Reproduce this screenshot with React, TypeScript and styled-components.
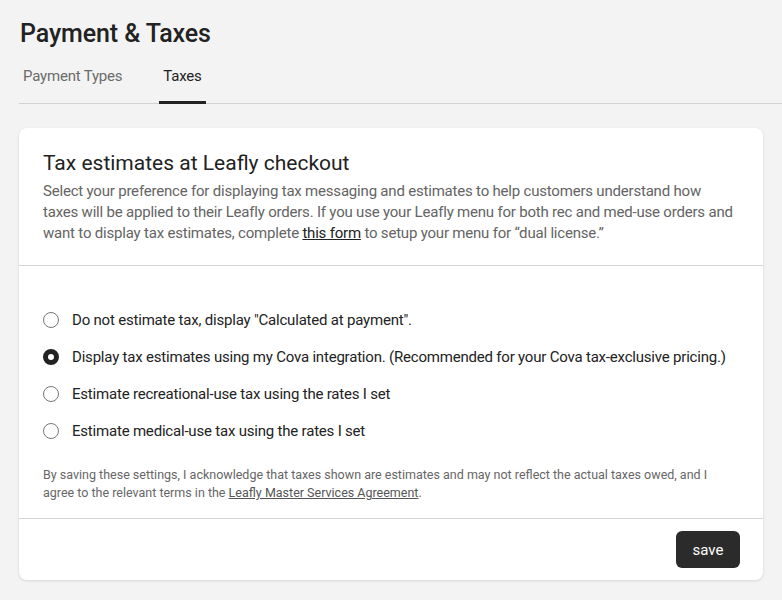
import { useState } from "react";
import styled, { createGlobalStyle } from "styled-components";

const GlobalStyle = createGlobalStyle`
  body {
    margin: 0;
    background: #f3f3f3;
    font-family: Roboto, "Noto Sans", Arial, sans-serif;
    color: #222;
  }
`;

const Page = styled.div`
  padding: 18px 0 20px 19px;
`;

const PageTitle = styled.h1`
  margin: 0 0 0 1px;
  font-size: 25px;
  line-height: 32px;
  font-weight: 500;
  letter-spacing: -0.1px;
  color: #222;
`;

const TabBar = styled.div`
  display: flex;
  gap: 33px;
  margin-top: 16px;
  border-bottom: 1px solid #d2d2d2;
`;

const Tab = styled.button<{ $active?: boolean }>`
  background: none;
  border: none;
  padding: 0 4px 15px;
  margin-bottom: -1px;
  font-family: inherit;
  font-size: 15px;
  line-height: 20px;
  letter-spacing: -0.2px;
  color: ${(p) => (p.$active ? "#222" : "#6b6b6b")};
  border-bottom: 3px solid ${(p) => (p.$active ? "#222" : "transparent")};
  cursor: pointer;
`;

const Card = styled.section`
  margin: 24px 19px 0 0;
  background: #fff;
  border-radius: 8px;
  box-shadow: 0 1px 3px rgba(0, 0, 0, 0.12);
`;

const CardHeader = styled.div`
  padding: 22px 24px 21px;
  border-bottom: 1px solid #d6d6d6;
`;

const CardTitle = styled.h2`
  margin: 0 0 5px;
  font-size: 21px;
  line-height: 26px;
  font-weight: 400;
  color: #222;
`;

const Description = styled.p`
  margin: 0;
  font-size: 15px;
  line-height: 21px;
  letter-spacing: -0.2px;
  white-space: nowrap;
  color: #646464;
  a {
    color: #222;
    text-decoration: underline;
  }
`;

const OptionsSection = styled.div`
  padding: 35px 24px 16px;
  border-bottom: 1px solid #d6d6d6;
`;

const OptionRow = styled.label`
  display: flex;
  align-items: center;
  gap: 13px;
  height: 37px;
  font-size: 15px;
  letter-spacing: -0.2px;
  white-space: nowrap;
  color: #222;
  cursor: pointer;
`;

const RadioDot = styled.span<{ $checked?: boolean }>`
  box-sizing: border-box;
  width: 16px;
  height: 16px;
  border-radius: 50%;
  flex-shrink: 0;
  border: ${(p) => (p.$checked ? "5px solid #222" : "1px solid #777")};
  background: #fff;
`;

const Footnote = styled.p`
  margin: 17px 0 0;
  font-size: 12.5px;
  line-height: 18px;
  white-space: nowrap;
  color: #666;
  a {
    color: #555;
    text-decoration: underline;
  }
`;

const CardFooter = styled.div`
  display: flex;
  justify-content: flex-end;
  padding: 12px 23px 12px;
`;

const SaveButton = styled.button`
  width: 64px;
  height: 37px;
  border: none;
  border-radius: 6px;
  background: #2b2b2b;
  color: #fff;
  font-family: inherit;
  font-size: 15px;
  cursor: pointer;
`;

const options = [
  'Do not estimate tax, display "Calculated at payment".',
  "Display tax estimates using my Cova integration. (Recommended for your Cova tax-exclusive pricing.)",
  "Estimate recreational-use tax using the rates I set",
  "Estimate medical-use tax using the rates I set",
];

const App = () => {
  const [tab, setTab] = useState("taxes");
  const [selected, setSelected] = useState(1);

  return (
    <Page>
      <GlobalStyle />
      <PageTitle>Payment &amp; Taxes</PageTitle>
      <TabBar>
        <Tab $active={tab === "types"} onClick={() => setTab("types")}>
          Payment Types
        </Tab>
        <Tab $active={tab === "taxes"} onClick={() => setTab("taxes")}>
          Taxes
        </Tab>
      </TabBar>

      <Card>
        <CardHeader>
          <CardTitle>Tax estimates at Leafly checkout</CardTitle>
          <Description>
            Select your preference for displaying tax messaging and estimates to help customers understand how
            <br />
            taxes will be applied to their Leafly orders. If you use your Leafly menu for both rec and med-use orders and
            <br />
            want to display tax estimates, complete <a href="#">this form</a> to setup your menu for “dual license.”
          </Description>
        </CardHeader>

        <OptionsSection>
          {options.map((label, i) => (
            <OptionRow key={i} onClick={() => setSelected(i)}>
              <RadioDot $checked={selected === i} />
              {label}
            </OptionRow>
          ))}
          <Footnote>
            By saving these settings, I acknowledge that taxes shown are estimates and may not reflect the actual taxes owed, and I
            <br />
            agree to the relevant terms in the <a href="#">Leafly Master Services Agreement</a>.
          </Footnote>
        </OptionsSection>

        <CardFooter>
          <SaveButton>save</SaveButton>
        </CardFooter>
      </Card>
    </Page>
  );
};

export default App;
